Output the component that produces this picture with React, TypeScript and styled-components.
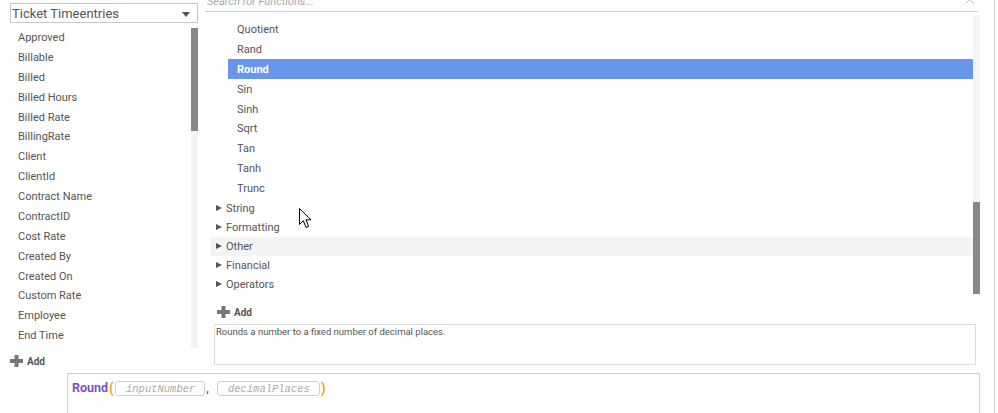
import React from "react";
import styled, { createGlobalStyle } from "styled-components";

const Global = createGlobalStyle`
  html, body { margin: 0; padding: 0; background: #fff; }
  body { font-family: Roboto, "Liberation Sans", Arial, sans-serif; color: #555; }
  * { box-sizing: border-box; }
`;

const Page = styled.div`
  position: relative;
  width: 995px;
  height: 413px;
  border-right: 1px solid #d0d0d0;
  overflow: hidden;
  display: flex;
  flex-direction: column;
`;

const Main = styled.div`
  display: flex;
  height: 373px;
  flex: none;
`;

const LeftCol = styled.div`
  width: 198px;
  display: flex;
  flex-direction: column;
`;

const Select = styled.div`
  margin: 3px 0 0 10px;
  width: 188px;
  height: 20px;
  border: 1px solid #c8c8c8;
  display: flex;
  align-items: center;
  justify-content: space-between;
  padding: 0 7px 0 1px;
  font-size: 13px;
  color: #555;
`;

const Caret = styled.span`
  width: 0;
  height: 0;
  border-left: 4px solid transparent;
  border-right: 4px solid transparent;
  border-top: 5px solid #555;
  margin-top: 2px;
`;

const ScrollBox = styled.div<{ $h: number; $ml?: number; $mt: number }>`
  display: flex;
  flex: none;
  height: ${(p) => p.$h}px;
  margin-left: ${(p) => p.$ml ?? 0}px;
  margin-top: ${(p) => p.$mt}px;
`;

const Rows = styled.div<{ $pt?: number }>`
  flex: 1;
  padding-top: ${(p) => p.$pt ?? 0}px;
  display: flex;
  flex-direction: column;
`;

const Track = styled.div`
  width: 7px;
  background: #f4f4f4;
  flex: none;
`;

const Thumb = styled.div<{ $top: number; $h: number }>`
  margin-top: ${(p) => p.$top}px;
  height: ${(p) => p.$h}px;
  background: #888;
`;

const FieldRow = styled.div`
  height: 19.875px;
  line-height: 20px;
  padding-top: 1px;
  padding-left: 18px;
  font-size: 11px;
  color: #555;
  white-space: nowrap;
`;

const AddRow = styled.div<{ $mt: number; $ml: number }>`
  display: flex;
  align-items: center;
  gap: 4px;
  height: 14px;
  margin-top: ${(p) => p.$mt}px;
  margin-left: ${(p) => p.$ml}px;
  font-size: 10px;
  font-weight: 700;
  color: #555;
`;

const RightCol = styled.div`
  margin-left: 7px;
  width: 775px;
  display: flex;
  flex-direction: column;
`;

const SearchRow = styled.div`
  width: 773px;
  height: 12px;
  flex: none;
  border-bottom: 1px solid #cfcfcf;
  display: flex;
  justify-content: space-between;
  align-items: flex-start;
  padding: 0 4px 0 2px;
`;

const Placeholder = styled.span`
  font-size: 11px;
  font-style: italic;
  color: #a8a8a8;
  line-height: 13px;
  margin-top: -5px;
`;

const Chevron = styled.svg`
  margin-top: -2px;
`;

const CatRow = styled.div<{ $hover?: boolean }>`
  height: 19px;
  display: flex;
  align-items: center;
  gap: 4px;
  padding-left: 6px;
  padding-top: 1px;
  font-size: 11px;
  color: #555;
  background: ${(p) => (p.$hover ? "#f4f4f4" : "transparent")};
`;

const CatRowFirst = styled(CatRow)`
  height: 19.875px;
`;

const Tri = styled.span`
  width: 0;
  height: 0;
  border-top: 3.5px solid transparent;
  border-bottom: 3.5px solid transparent;
  border-left: 6px solid #555;
  margin-top: -1px;
`;

const FnRow = styled.div<{ $sel?: boolean }>`
  height: 19.875px;
  line-height: 19px;
  padding-top: 1px;
  margin-left: 18px;
  padding-left: 9px;
  font-size: 11px;
  color: ${(p) => (p.$sel ? "#fff" : "#555")};
  font-weight: ${(p) => (p.$sel ? 700 : 400)};
  background: ${(p) => (p.$sel ? "#6896ea" : "transparent")};
`;

const Desc = styled.div`
  margin: 5px 0 0 9px;
  width: 762px;
  height: 41px;
  flex: none;
  border: 1px solid #ddd;
  padding: 1px 1px;
  font-size: 9.5px;
  line-height: 12px;
  color: #555;
`;

const Formula = styled.div`
  flex: none;
  margin-left: 67px;
  width: 913px;
  height: 60px;
  border: 1px solid #d0d0d0;
  padding: 6px 4px;
  display: flex;
  align-items: flex-start;
`;

const FnName = styled.span`
  font-size: 12.5px;
  font-weight: 700;
  color: #7b52c4;
  line-height: 16px;
`;

const Paren = styled.span`
  font-size: 14px;
  font-weight: 700;
  color: #f5a623;
  line-height: 16px;
  margin: 0 1px;
`;

const Comma = styled.span`
  font-size: 13px;
  color: #555;
  line-height: 16px;
  margin: 0 8px 0 1px;
`;

const Param = styled.span`
  display: inline-flex;
  align-items: center;
  height: 15px;
  margin-top: 1px;
  padding: 0 9px 0 10px;
  border: 1px solid #cfcfcf;
  border-radius: 3px;
  font-family: "Liberation Mono", "DejaVu Sans Mono", monospace;
  font-style: italic;
  font-size: 10.5px;
  color: #aaa;
`;

const Cursor = styled.svg`
  position: absolute;
  left: 299px;
  top: 208px;
`;

const PlusIcon = () => (
  <svg width="13" height="12" viewBox="0 0 13 12">
    <rect x="4.5" y="0" width="4" height="12" fill="#777" />
    <rect x="0" y="4" width="13" height="4" fill="#777" />
  </svg>
);

const fields = [
  "Approved",
  "Billable",
  "Billed",
  "Billed Hours",
  "Billed Rate",
  "BillingRate",
  "Client",
  "ClientId",
  "Contract Name",
  "ContractID",
  "Cost Rate",
  "Created By",
  "Created On",
  "Custom Rate",
  "Employee",
  "End Time",
];

const fns = ["Quotient", "Rand", "Round", "Sin", "Sinh", "Sqrt", "Tan", "Tanh", "Trunc"];
const cats = ["Formatting", "Other", "Financial", "Operators"];

export default function App() {
  return (
    <>
      <Global />
      <Page>
        <Main>
          <LeftCol>
            <Select>
              <span>Ticket Timeentries</span>
              <Caret />
            </Select>
            <ScrollBox $h={321} $mt={4}>
              <Rows>
                {fields.map((f) => (
                  <FieldRow key={f}>{f}</FieldRow>
                ))}
              </Rows>
              <Track>
                <Thumb $top={1} $h={103} />
              </Track>
            </ScrollBox>
            <AddRow $mt={6} $ml={10}>
              <PlusIcon />
              <span>Add</span>
            </AddRow>
          </LeftCol>
          <RightCol>
            <SearchRow>
              <Placeholder>Search for Functions...</Placeholder>
              <Chevron width="9" height="6" viewBox="0 0 9 6">
                <polyline points="0.5,5.5 4.5,1.5 8.5,5.5" fill="none" stroke="#bbb" strokeWidth="1" />
              </Chevron>
            </SearchRow>
            <ScrollBox $h={279} $ml={5} $mt={3}>
              <Rows $pt={4}>
                {fns.map((f) => (
                  <FnRow key={f} $sel={f === "Round"}>
                    {f}
                  </FnRow>
                ))}
                <CatRowFirst>
                  <Tri />
                  <span>String</span>
                </CatRowFirst>
                {cats.map((c) => (
                  <CatRow key={c} $hover={c === "Other"}>
                    <Tri />
                    <span>{c}</span>
                  </CatRow>
                ))}
              </Rows>
              <Track>
                <Thumb $top={187} $h={92} />
              </Track>
            </ScrollBox>
            <AddRow $mt={11} $ml={12}>
              <PlusIcon />
              <span>Add</span>
            </AddRow>
            <Desc>Rounds a number to a fixed number of decimal places.</Desc>
          </RightCol>
        </Main>
        <Formula>
          <FnName>Round</FnName>
          <Paren>(</Paren>
          <Param>inputNumber</Param>
          <Comma>,</Comma>
          <Param>decimalPlaces</Param>
          <Paren>)</Paren>
        </Formula>
        <Cursor width="13" height="21" viewBox="0 0 13 21">
          <path
            d="M0.5 0.5 L0.5 16.5 L4.3 12.8 L7 19.5 L9.6 18.4 L7 11.8 L12 11.8 Z"
            fill="#fff"
            stroke="#000"
            strokeWidth="1"
            strokeLinejoin="miter"
          />
        </Cursor>
      </Page>
    </>
  );
}
